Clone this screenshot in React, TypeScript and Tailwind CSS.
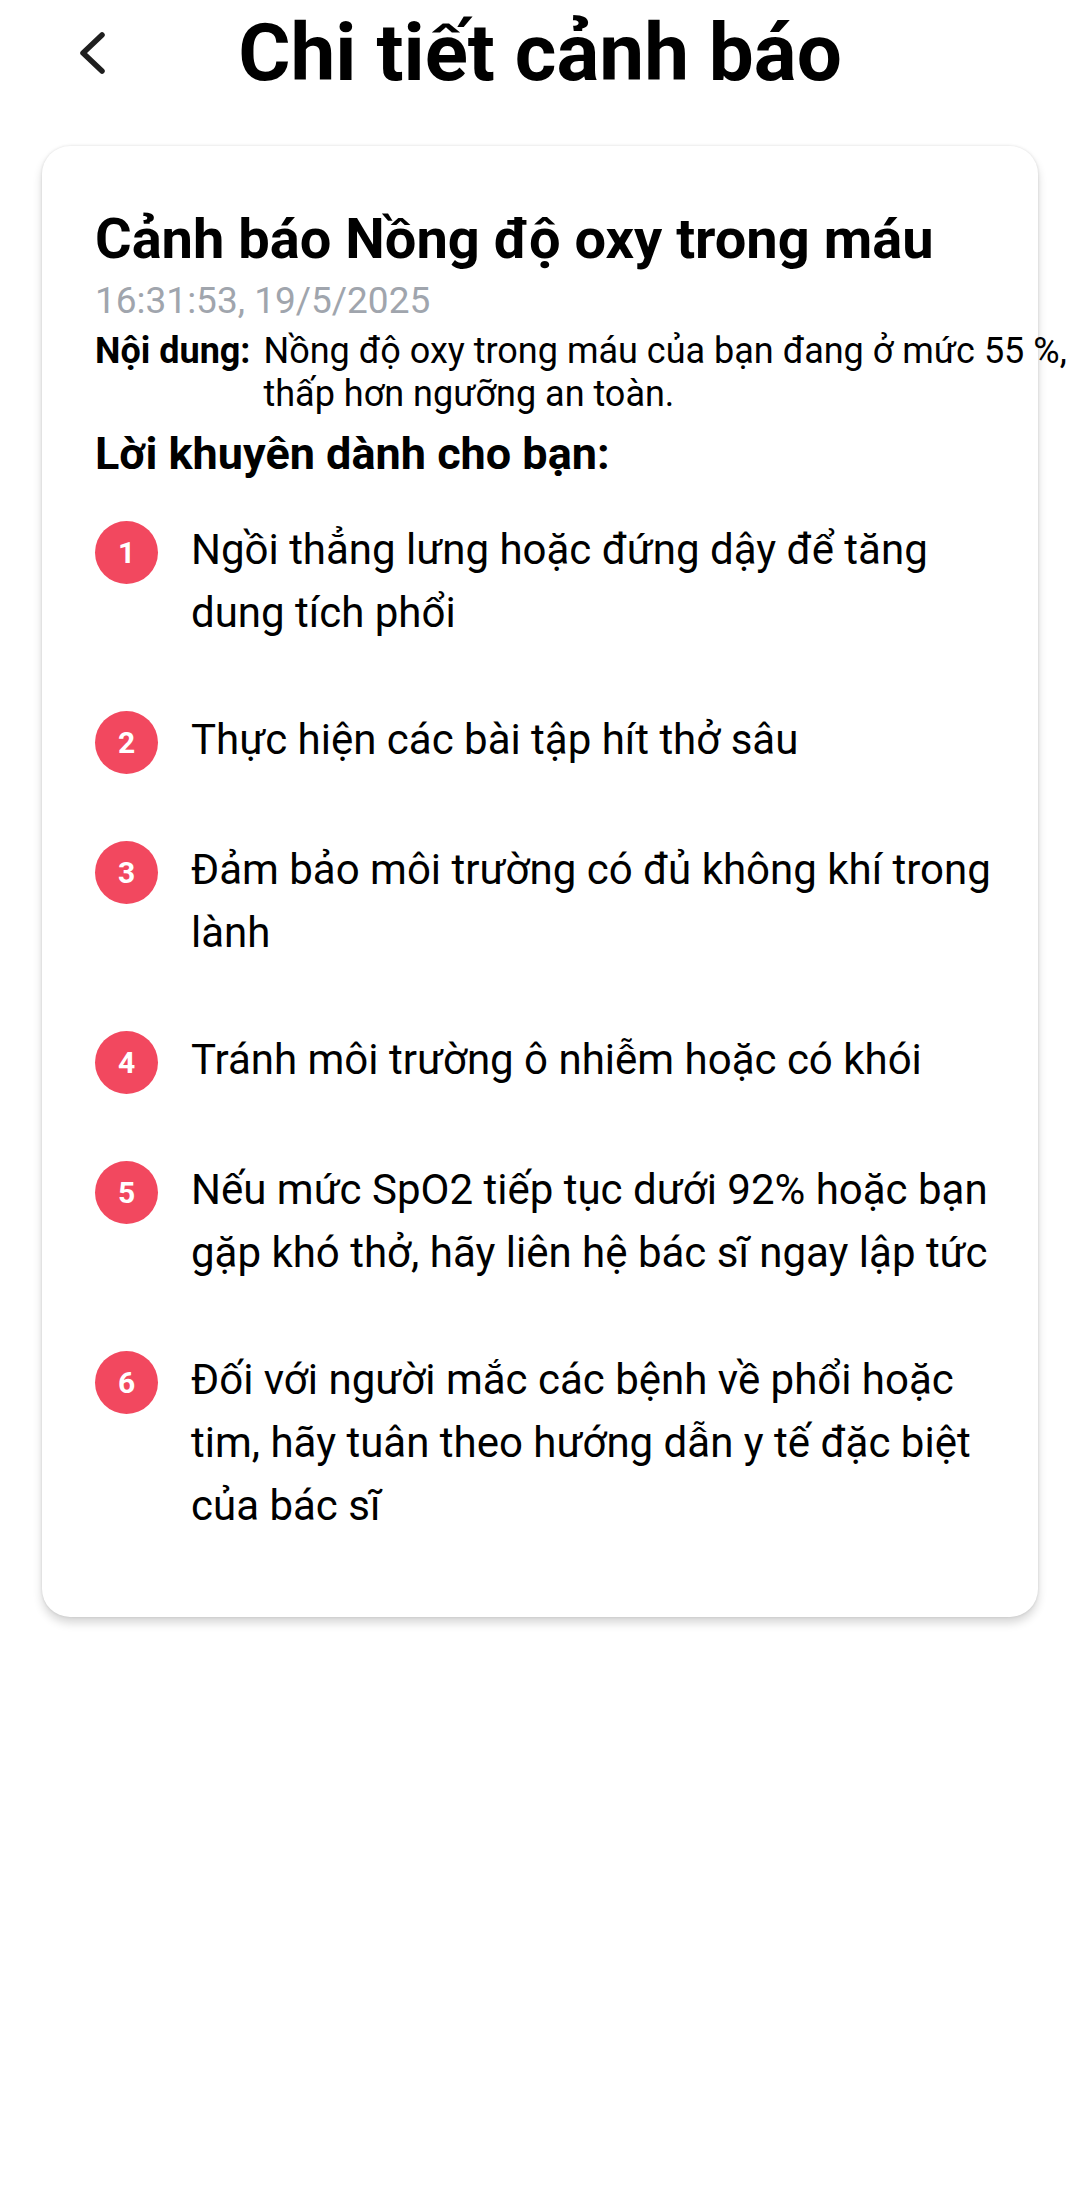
import React from "react";

const tips: string[] = [
  "Ngồi thẳng lưng hoặc đứng dậy để tăng dung tích phổi",
  "Thực hiện các bài tập hít thở sâu",
  "Đảm bảo môi trường có đủ không khí trong lành",
  "Tránh môi trường ô nhiễm hoặc có khói",
  "Nếu mức SpO2 tiếp tục dưới 92% hoặc bạn gặp khó thở, hãy liên hệ bác sĩ ngay lập tức",
  "Đối với người mắc các bệnh về phổi hoặc tim, hãy tuân theo hướng dẫn y tế đặc biệt của bác sĩ",
];

function BackIcon() {
  return (
    <svg width="30" height="46" viewBox="0 0 30 46" fill="none">
      <polyline
        points="24,5 5,23 24,41"
        stroke="#1f1f1f"
        strokeWidth="5.5"
        strokeLinecap="round"
        strokeLinejoin="round"
      />
    </svg>
  );
}

export default function App() {
  return (
    <div className="min-h-screen w-full overflow-hidden bg-white font-['Roboto','Liberation_Sans',sans-serif] text-black">
      {/* header */}
      <div className="flex items-center pt-[6px]">
        <div className="flex w-[140px] items-center pl-[78px]">
          <BackIcon />
        </div>
        <h1 className="flex-1 text-center text-[80px] font-bold leading-[94px]">
          Chi tiết cảnh báo
        </h1>
        <div className="w-[140px]" />
      </div>

      {/* card */}
      <div className="mx-[42px] mt-[46px] rounded-[28px] bg-white pb-[80px] pl-[53px] pr-[40px] pt-[60px] shadow-[0_0_3px_rgba(0,0,0,0.12),0_6px_10px_rgba(0,0,0,0.16)]">
        <h2 className="text-[56px] font-bold leading-[66px]">
          Cảnh báo Nồng độ oxy trong máu
        </h2>
        <div className="mt-[8px] text-[37px] leading-[42px] text-[#a0a5ad]">
          16:31:53, 19/5/2025
        </div>
        {/* content text is wider than the card on purpose, it runs off the edge */}
        <div className="mt-[8px] flex gap-[13px] text-[36px] leading-[43px]">
          <span className="shrink-0 font-bold">Nội dung:</span>
          <span className="w-[850px] shrink-0">
            Nồng độ oxy trong máu của bạn đang ở mức 55 %, thấp hơn ngưỡng an toàn.
          </span>
        </div>
        <h3 className="mt-[11px] text-[45px] font-bold leading-[53px]">
          Lời khuyên dành cho bạn:
        </h3>

        <ol className="mt-[38px] flex flex-col gap-[64px]">
          {tips.map((tip, index) => (
            <li key={index} className="flex items-start gap-[33px]">
              <div className="mt-[3px] flex size-[63px] shrink-0 items-center justify-center rounded-full bg-[#f2485f] text-[30px] font-bold text-white">
                {index + 1}
              </div>
              <p className="flex-1 text-[42px] leading-[63px]">{tip}</p>
            </li>
          ))}
        </ol>
      </div>
    </div>
  );
}
